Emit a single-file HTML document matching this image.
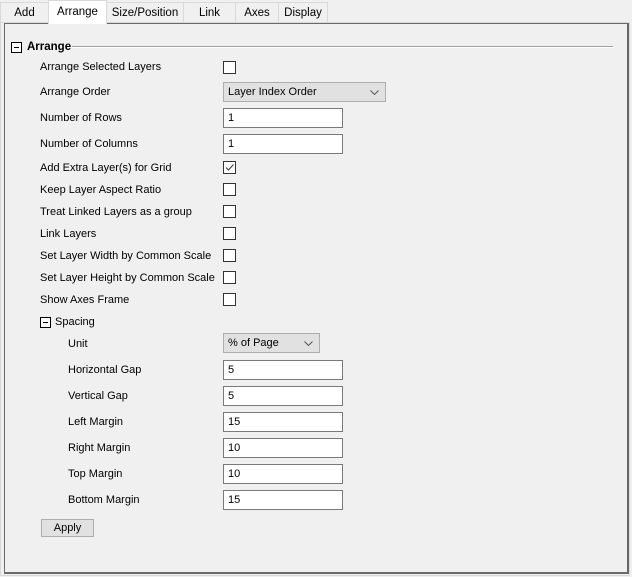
<!DOCTYPE html>
<html><head><style>
*{box-sizing:border-box}
body{margin:0;width:632px;height:577px;background:#f0f0f0;font-family:"Liberation Sans",sans-serif;font-size:11px;color:#000;position:relative;overflow:hidden}
.a{position:absolute;white-space:nowrap}
.tab{position:absolute;top:2px;height:21px;border:1px solid #d9d9d9;border-bottom:none;background:#f0f0f0;text-align:center;line-height:20px;font-size:11.5px}
.sel{top:0;height:24px;background:#fff;z-index:3;border-color:#d9d9d9;line-height:22px}
.cb{position:absolute;left:223px;width:13px;height:13px;border:1px solid #333;background:#fff}
.tb{position:absolute;left:223px;width:120px;height:20px;border:1px solid #7a7a7a;background:#fff;padding-left:4px;line-height:18px;font-size:11px}
.dd{position:absolute;left:223px;height:20px;border:1px solid #adadad;background:#e1e1e1;padding-left:4px;line-height:18px;font-size:11px}
.lab{position:absolute;left:40px;font-size:11px}
.lab2{position:absolute;left:68px;font-size:11px}
.mb{position:absolute;width:11px;height:11px;border:1px solid #000;background:#fff}
.mb:after{content:"";position:absolute;left:2px;top:4px;width:5px;height:1px;background:#000}
.chev{position:absolute;right:6px;top:7px}
</style></head><body>
<div class="tab" style="left:0;width:49px">Add</div>
<div class="tab sel" style="left:48px;width:59px">Arrange</div>
<div class="tab" style="left:106px;width:78px">Size/Position</div>
<div class="tab" style="left:183px;width:53px">Link</div>
<div class="tab" style="left:235px;width:44px">Axes</div>
<div class="tab" style="left:278px;width:50px">Display</div>
<div class="a" style="left:0;top:22px;width:630px;height:554px;border:1px solid #d9d9d9"></div>
<div class="a" style="left:4px;top:23px;width:625px;height:551px;border:1px solid #6a6a6a;border-right-width:2px;border-bottom-width:2px"></div>
<div class="a" style="left:72px;top:46px;width:541px;height:2px;border-top:1px solid #a0a0a0;border-bottom:1px solid #fff"></div>
<div class="mb" style="left:11px;top:42px"></div>
<div class="a" style="left:27px;top:41px;font-weight:bold;font-size:11.5px">Arrange</div>

<div class="lab" style="top:61px">Arrange Selected Layers</div><div class="cb" style="top:61px"></div>
<div class="lab" style="top:86px">Arrange Order</div><div class="dd" style="top:82px;width:163px">Layer Index Order<svg class="chev" width="9" height="5"><path d="M0.5 0.5L4.5 4.5L8.5 0.5" fill="none" stroke="#555"/></svg></div>
<div class="lab" style="top:112px">Number of Rows</div><div class="tb" style="top:108px">1</div>
<div class="lab" style="top:138px">Number of Columns</div><div class="tb" style="top:134px">1</div>
<div class="lab" style="top:162px">Add Extra Layer(s) for Grid</div><div class="cb" style="top:161px"><svg width="11" height="11" style="position:absolute;left:0;top:0"><path d="M2 5.5L4.5 8L9.5 2.5" fill="none" stroke="#333" stroke-width="1"/></svg></div>
<div class="lab" style="top:184px">Keep Layer Aspect Ratio</div><div class="cb" style="top:183px"></div>
<div class="lab" style="top:206px">Treat Linked Layers as a group</div><div class="cb" style="top:205px"></div>
<div class="lab" style="top:228px">Link Layers</div><div class="cb" style="top:227px"></div>
<div class="lab" style="top:250px">Set Layer Width by Common Scale</div><div class="cb" style="top:249px"></div>
<div class="lab" style="top:272px">Set Layer Height by Common Scale</div><div class="cb" style="top:271px"></div>
<div class="lab" style="top:294px">Show Axes Frame</div><div class="cb" style="top:293px"></div>
<div class="mb" style="left:40px;top:317px"></div><div class="a" style="left:55px;top:316px">Spacing</div>
<div class="lab2" style="top:338px">Unit</div><div class="dd" style="top:333px;width:97px">% of Page<svg class="chev" width="9" height="5"><path d="M0.5 0.5L4.5 4.5L8.5 0.5" fill="none" stroke="#555"/></svg></div>
<div class="lab2" style="top:364px">Horizontal Gap</div><div class="tb" style="top:360px">5</div>
<div class="lab2" style="top:390px">Vertical Gap</div><div class="tb" style="top:386px">5</div>
<div class="lab2" style="top:416px">Left Margin</div><div class="tb" style="top:412px">15</div>
<div class="lab2" style="top:442px">Right Margin</div><div class="tb" style="top:438px">10</div>
<div class="lab2" style="top:468px">Top Margin</div><div class="tb" style="top:464px">10</div>
<div class="lab2" style="top:494px">Bottom Margin</div><div class="tb" style="top:490px">15</div>
<div class="a" style="left:41px;top:519px;width:53px;height:18px;border:1px solid #adadad;background:#e1e1e1;text-align:center;line-height:16px">Apply</div>
</body></html>
